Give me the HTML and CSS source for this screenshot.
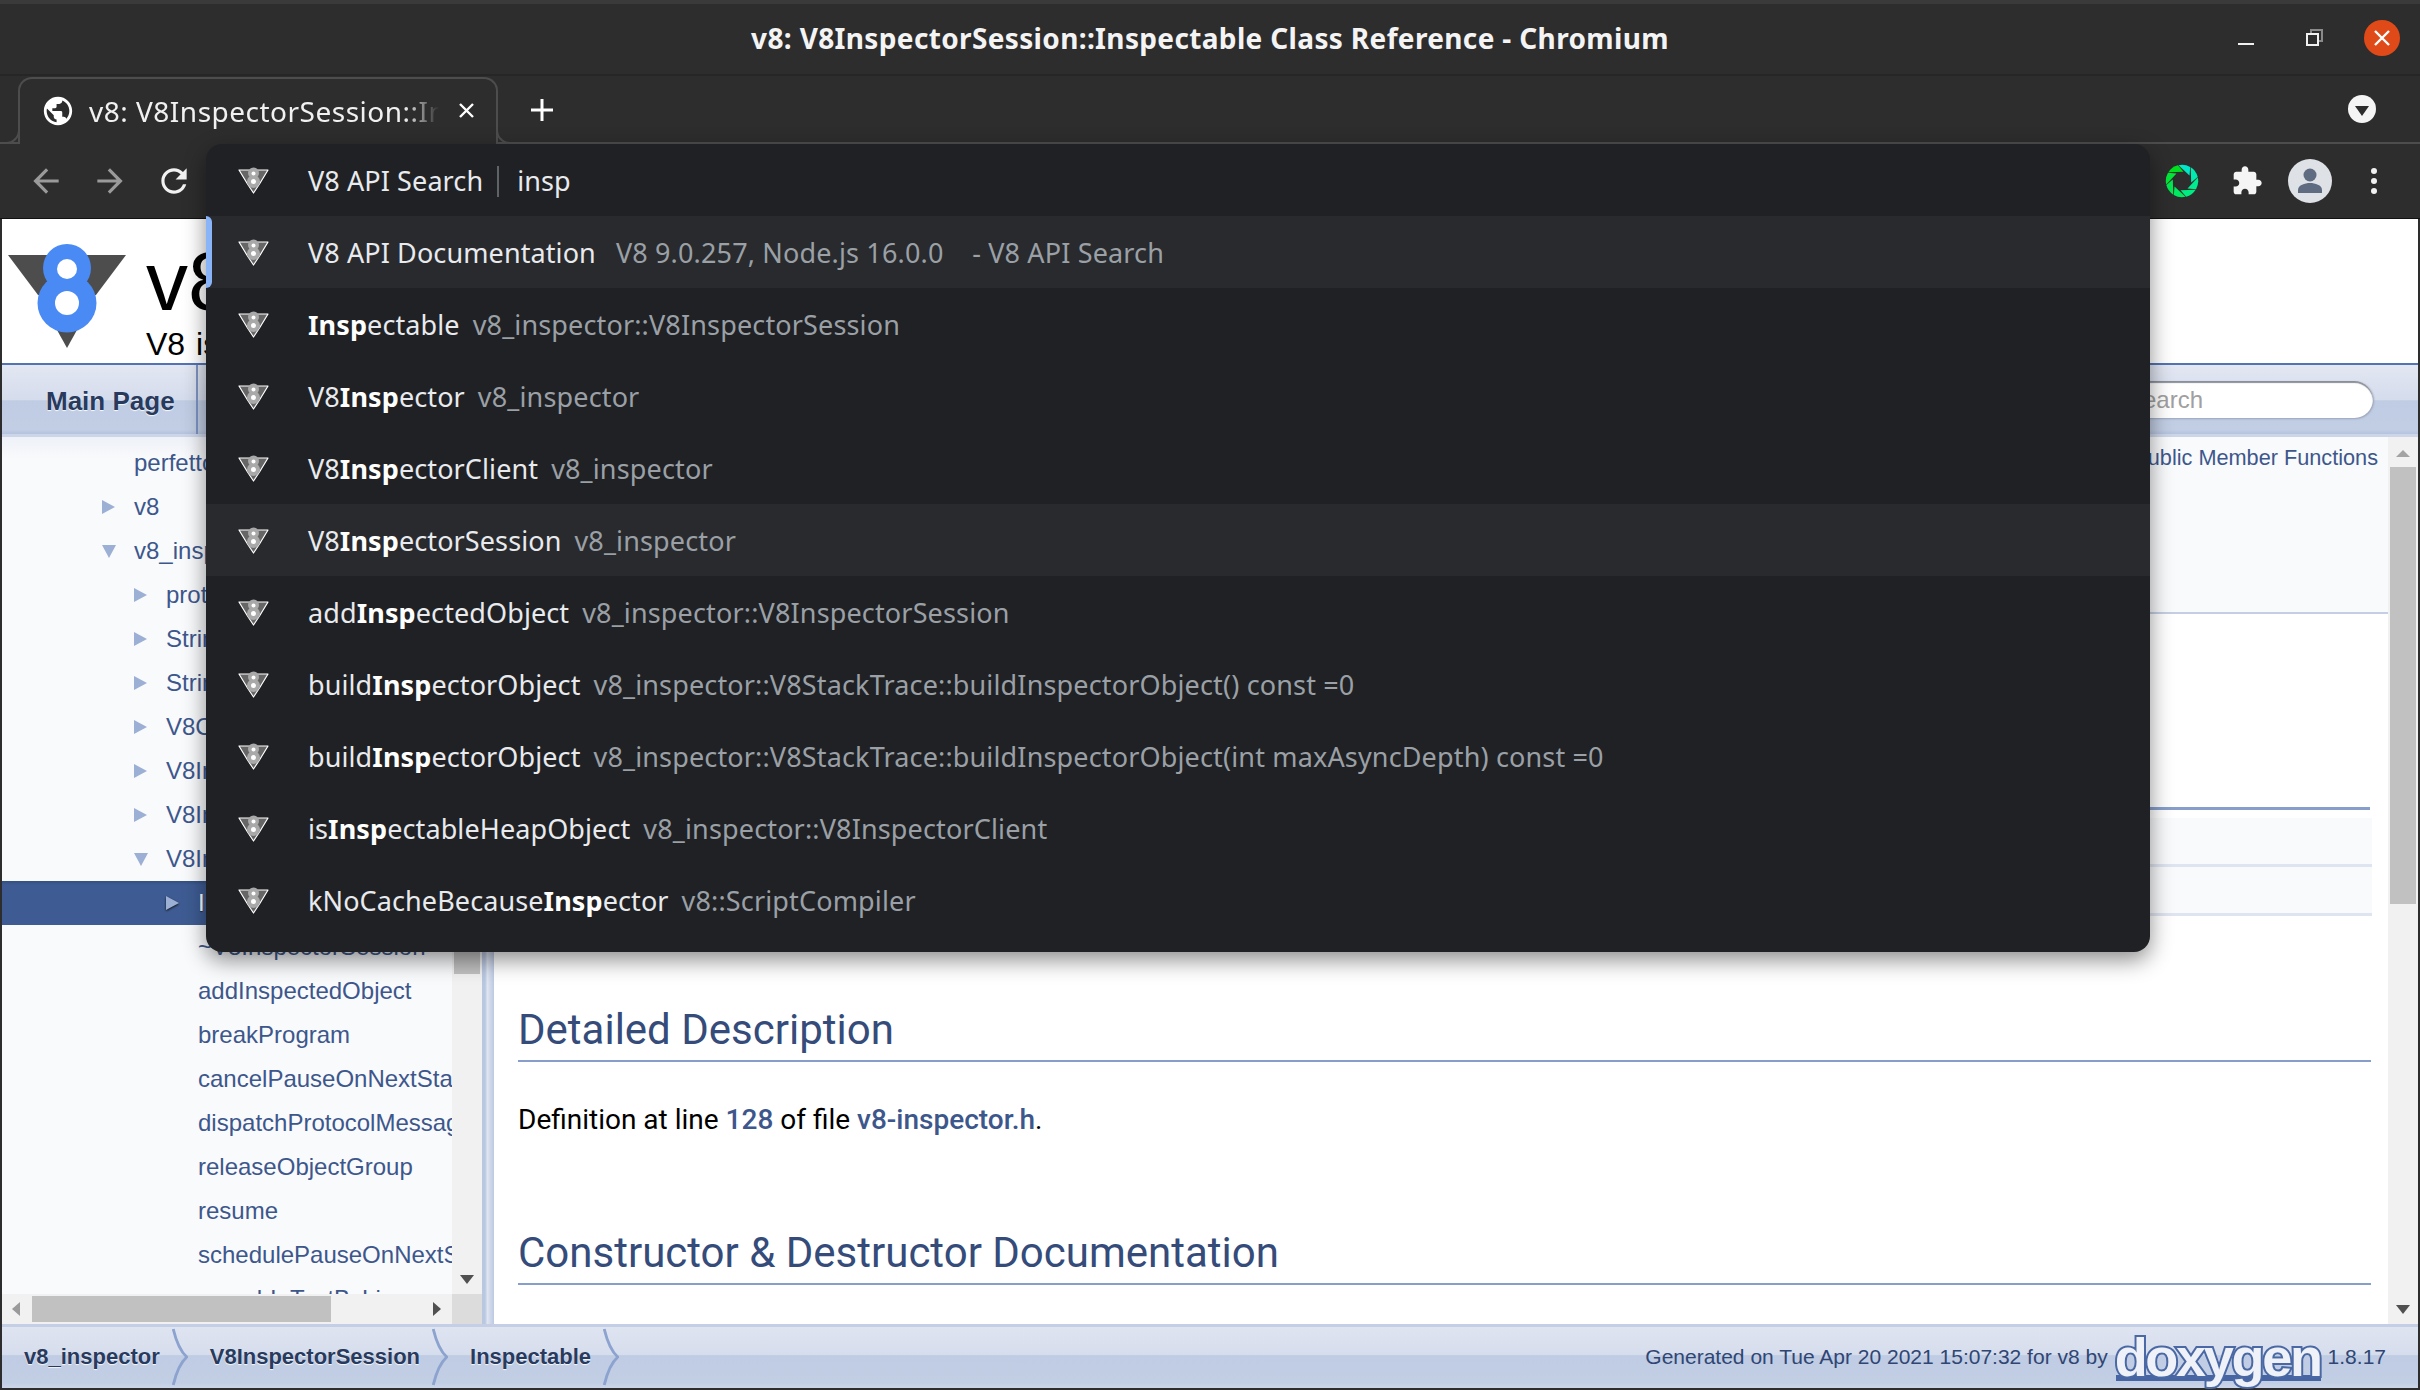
FILE: index.html
```html
<!DOCTYPE html>
<html lang="en">
<head>
  <meta charset="UTF-8" />
  <title>v8: V8InspectorSession::Inspectable Class Reference - Chromium</title>
  <link rel="stylesheet" href="styles.css">
</head>
<body>
  <svg class="defs" width="0" height="0">
    <symbol id="v8-gray" viewBox="0 0 31 27">
      <path d="M1 3 L11 3 L15.5 5 L20 3 L30 3 L21.5 17 L15.5 26 L9.5 17 Z" fill="#666" stroke="#fff" stroke-width="1.2" stroke-linejoin="round"/>
      <circle cx="15.5" cy="6" r="5.5" fill="#a9a9a9"/>
      <circle cx="15.5" cy="14.5" r="6.5" fill="#a9a9a9"/>
      <circle cx="15.5" cy="6.6" r="2" fill="#fff"/>
      <circle cx="15.5" cy="14.6" r="2.5" fill="#fff"/>
    </symbol>
    <symbol id="crumb-sep" viewBox="0 0 16 60">
      <path d="M1 1 Q6 22 15 30 Q6 38 1 59" fill="none" stroke="#8ca3cf" stroke-width="3"/>
    </symbol>
  </svg>

  <div class="titlebar">
    <div class="window-title">v8: V8InspectorSession::Inspectable Class Reference - Chromium</div>
    <div class="window-controls">
      <span class="win-min"></span>
      <span class="win-restore"></span>
      <span class="win-close">
        <svg width="20" height="20" viewBox="0 0 20 20"><path d="M3 3 L17 17 M17 3 L3 17" stroke="#fff" stroke-width="2.4"/></svg>
      </span>
    </div>
  </div>

  <div class="tabstrip">
    <div class="tab">
      <svg class="favicon" width="34" height="34" viewBox="0 0 24 24"><path fill="#fff" d="M12 2C6.48 2 2 6.48 2 12s4.48 10 10 10 10-4.48 10-10S17.52 2 12 2zm-1 17.93c-3.95-.49-7-3.85-7-7.93 0-.62.08-1.21.21-1.79L9 15v1c0 1.1.9 2 2 2v1.93zm6.9-2.54c-.26-.81-1-1.39-1.9-1.39h-1v-3c0-.55-.45-1-1-1H8v-2h2c.55 0 1-.45 1-1V7h2c1.1 0 2-.9 2-2v-.41c2.93 1.19 5 4.06 5 7.41 0 2.08-.8 3.97-2.1 5.39z"/></svg>
      <span class="tab-title">v8: V8InspectorSession::Inspectable Class Reference</span>
      <svg class="tab-close" width="17" height="17" viewBox="0 0 17 17"><path d="M2 2 L15 15 M15 2 L2 15" stroke="#fff" stroke-width="2.4"/></svg>
    </div>
    <svg class="new-tab" width="24" height="24" viewBox="0 0 24 24"><path d="M12 1 V23 M1 12 H23" stroke="#fff" stroke-width="3"/></svg>
    <span class="tab-search"><i></i></span>
  </div>

  <div class="toolbar">
    <div class="nav-buttons">
      <svg width="38" height="38" viewBox="0 0 24 24"><path fill="#9a9a9a" d="M20 11H7.83l5.59-5.59L12 4l-8 8 8 8 1.41-1.41L7.83 13H20v-2z"/></svg>
      <svg width="38" height="38" viewBox="0 0 24 24"><path fill="#9a9a9a" d="M4 11h12.17l-5.59-5.59L12 4l8 8-8 8-1.41-1.41L16.17 13H4v-2z"/></svg>
      <svg width="38" height="38" viewBox="0 0 24 24"><path fill="#f1f1f1" d="M17.65 6.35C16.2 4.9 14.21 4 12 4c-4.42 0-7.99 3.58-7.99 8s3.57 8 7.99 8c3.73 0 6.84-2.55 7.73-6h-2.08c-.82 2.33-3.04 4-5.65 4-3.31 0-6-2.69-6-6s2.69-6 6-6c1.66 0 3.14.69 4.22 1.78L13 11h7V4l-2.35 2.35z"/></svg>
    </div>
    <div class="toolbar-right">
      <svg class="aperture" width="34" height="34" viewBox="-17 -17 34 34">
        <path d="M-3.5 -15.8 A16.2 16.2 0 0 1 8.2 -14 L7.5 -5.5 Z" fill="#00e8c8"/>
        <path d="M-3.5 -15.8 A16.2 16.2 0 0 1 8.2 -14 L7.5 -5.5 Z" fill="#00ecb0" transform="rotate(45)"/>
        <path d="M-3.5 -15.8 A16.2 16.2 0 0 1 8.2 -14 L7.5 -5.5 Z" fill="#00ec90" transform="rotate(90)"/>
        <path d="M-3.5 -15.8 A16.2 16.2 0 0 1 8.2 -14 L7.5 -5.5 Z" fill="#00ec80" transform="rotate(135)"/>
        <path d="M-3.5 -15.8 A16.2 16.2 0 0 1 8.2 -14 L7.5 -5.5 Z" fill="#00ea60" transform="rotate(180)"/>
        <path d="M-3.5 -15.8 A16.2 16.2 0 0 1 8.2 -14 L7.5 -5.5 Z" fill="#00e850" transform="rotate(225)"/>
        <path d="M-3.5 -15.8 A16.2 16.2 0 0 1 8.2 -14 L7.5 -5.5 Z" fill="#00e838" transform="rotate(270)"/>
        <path d="M-3.5 -15.8 A16.2 16.2 0 0 1 8.2 -14 L7.5 -5.5 Z" fill="#00e020" transform="rotate(315)"/>
      </svg>
      <svg class="puzzle" width="32" height="32" viewBox="0 0 24 24"><path fill="#f5f5f5" d="M20.5 11H19V7c0-1.1-.9-2-2-2h-4V3.5C13 2.12 11.88 1 10.5 1S8 2.12 8 3.5V5H4c-1.1 0-1.99.9-1.99 2v3.8H3.5c1.49 0 2.7 1.21 2.7 2.7s-1.21 2.7-2.7 2.7H2V20c0 1.1.9 2 2 2h3.8v-1.5c0-1.49 1.21-2.7 2.7-2.7 1.49 0 2.7 1.21 2.7 2.7V22H17c1.1 0 2-.9 2-2v-4h1.5c1.38 0 2.5-1.12 2.5-2.5S21.88 11 20.5 11z"/></svg>
      <svg class="avatar" width="44" height="44" viewBox="0 0 44 44">
        <circle cx="22" cy="22" r="22" fill="#dee1e6"/>
        <circle cx="22" cy="16" r="6.5" fill="#5f6b80"/>
        <path d="M10 34 V31 C10 26 17 24 22 24 C27 24 34 26 34 31 V34 Z" fill="#5f6b80"/>
      </svg>
      <span class="kebab"><i></i><i></i><i></i></span>
    </div>
  </div>

  <div class="page">
    <div class="doc-header">
      <svg class="v8-logo" width="118" height="106" viewBox="0 0 118 106">
        <path d="M0 12 L45 12 L45 56 L30 52 Z M118 12 L73 12 L73 56 L88 52 Z" fill="#4d4d4d"/>
        <path d="M49 87 L59 105 L69 87 Z" fill="#4d4d4d"/>
        <circle cx="59" cy="25" r="24" fill="#4a8af4"/>
        <circle cx="59" cy="60" r="29.5" fill="#4a8af4"/>
        <circle cx="59" cy="26" r="10" fill="#fff"/>
        <circle cx="59" cy="60" r="12" fill="#fff"/>
      </svg>
      <div class="project">
        <div class="project-name">v8</div>
        <div class="project-brief">V8 is</div>
      </div>
    </div>

    <div class="doc-tabs">
      <a class="main-tab">Main Page</a>
      <div class="search-box">Search</div>
    </div>

    <div class="doc-body">
      <div class="side-nav">
        <div class="tree-area">
          <ul class="tree">
            <li class="lvl1"><a>perfetto</a></li>
            <li class="lvl1"><i class="arrow-r"></i><a>v8</a></li>
            <li class="lvl1"><i class="arrow-d"></i><a>v8_inspector</a></li>
            <li class="lvl2"><i class="arrow-r"></i><a>protocol</a></li>
            <li class="lvl2"><i class="arrow-r"></i><a>StringBuffer</a></li>
            <li class="lvl2"><i class="arrow-r"></i><a>StringView</a></li>
            <li class="lvl2"><i class="arrow-r"></i><a>V8ContextInfo</a></li>
            <li class="lvl2"><i class="arrow-r"></i><a>V8Inspector</a></li>
            <li class="lvl2"><i class="arrow-r"></i><a>V8InspectorClient</a></li>
            <li class="lvl2"><i class="arrow-d"></i><a>V8InspectorSession</a></li>
            <li class="lvl3 selected"><i class="arrow-r"></i><a>Inspectable</a></li>
            <li class="lvl4"><a>~V8InspectorSession</a></li>
            <li class="lvl4"><a>addInspectedObject</a></li>
            <li class="lvl4"><a>breakProgram</a></li>
            <li class="lvl4"><a>cancelPauseOnNextStatement</a></li>
            <li class="lvl4"><a>dispatchProtocolMessage</a></li>
            <li class="lvl4"><a>releaseObjectGroup</a></li>
            <li class="lvl4"><a>resume</a></li>
            <li class="lvl4"><a>schedulePauseOnNextStatement</a></li>
            <li class="lvl4"><a>searchInTextByLines</a></li>
          </ul>
          <div class="vscroll tree-scroll">
            <div class="vthumb"></div>
            <i class="sb-down"></i>
          </div>
        </div>
        <div class="hscroll">
          <div class="hscroll-track">
            <i class="sb-left"></i>
            <div class="hthumb"></div>
            <i class="sb-right"></i>
          </div>
          <div class="sb-corner"></div>
        </div>
      </div>
      <div class="splitter"></div>

      <div class="doc-content">
        <div class="content-inner">
          <div class="summary-bar"><a>Public Member Functions</a></div>
          <div class="member-block">
            <div class="member-head"></div>
            <div class="member-row"></div>
            <div class="member-row"></div>
          </div>
          <h2 class="first">Detailed Description</h2>
          <p class="definition">Definition at line <a>128</a> of file <a>v8-inspector.h</a>.</p>
          <h2 class="second">Constructor &amp; Destructor Documentation</h2>
        </div>
        <div class="vscroll page-scroll">
          <i class="sb-up"></i>
          <div class="vthumb"></div>
          <i class="sb-down"></i>
        </div>
      </div>
    </div>

    <div class="doc-footer">
      <ul class="crumbs">
        <li>v8_inspector<svg class="crumb-chevron"><use href="#crumb-sep"/></svg></li>
        <li>V8InspectorSession<svg class="crumb-chevron"><use href="#crumb-sep"/></svg></li>
        <li>Inspectable<svg class="crumb-chevron"><use href="#crumb-sep"/></svg></li>
      </ul>
      <div class="generated">
        Generated on Tue Apr 20 2021 15:07:32 for v8 by
        <span class="doxygen">doxygen</span>
        1.8.17
      </div>
    </div>
  </div>

  <!-- omnibox dropdown, sits on top of everything -->
  <div class="omnibox">
    <div class="omni-row input-row">
      <svg class="omni-icon"><use href="#v8-gray"/></svg>
      <span class="keyword">V8 API Search</span><span class="omni-query">insp</span>
    </div>
    <div class="omni-row active">
      <svg class="omni-icon"><use href="#v8-gray"/></svg>
      <span>V8 API Documentation</span><span class="dim wide">V8 9.0.257, Node.js 16.0.0 &nbsp;&nbsp; - V8 API Search</span>
    </div>
    <div class="omni-row">
      <svg class="omni-icon"><use href="#v8-gray"/></svg>
      <span><b>Insp</b>ectable</span><span class="dim">v8_inspector::V8InspectorSession</span>
    </div>
    <div class="omni-row">
      <svg class="omni-icon"><use href="#v8-gray"/></svg>
      <span>V8<b>Insp</b>ector</span><span class="dim">v8_inspector</span>
    </div>
    <div class="omni-row">
      <svg class="omni-icon"><use href="#v8-gray"/></svg>
      <span>V8<b>Insp</b>ectorClient</span><span class="dim">v8_inspector</span>
    </div>
    <div class="omni-row hover">
      <svg class="omni-icon"><use href="#v8-gray"/></svg>
      <span>V8<b>Insp</b>ectorSession</span><span class="dim">v8_inspector</span>
    </div>
    <div class="omni-row">
      <svg class="omni-icon"><use href="#v8-gray"/></svg>
      <span>add<b>Insp</b>ectedObject</span><span class="dim">v8_inspector::V8InspectorSession</span>
    </div>
    <div class="omni-row">
      <svg class="omni-icon"><use href="#v8-gray"/></svg>
      <span>build<b>Insp</b>ectorObject</span><span class="dim">v8_inspector::V8StackTrace::buildInspectorObject() const =0</span>
    </div>
    <div class="omni-row">
      <svg class="omni-icon"><use href="#v8-gray"/></svg>
      <span>build<b>Insp</b>ectorObject</span><span class="dim">v8_inspector::V8StackTrace::buildInspectorObject(int maxAsyncDepth) const =0</span>
    </div>
    <div class="omni-row">
      <svg class="omni-icon"><use href="#v8-gray"/></svg>
      <span>is<b>Insp</b>ectableHeapObject</span><span class="dim">v8_inspector::V8InspectorClient</span>
    </div>
    <div class="omni-row">
      <svg class="omni-icon"><use href="#v8-gray"/></svg>
      <span>kNoCacheBecause<b>Insp</b>ector</span><span class="dim">v8::ScriptCompiler</span>
    </div>
  </div>
</body>
</html>
```

FILE: styles.css
```css
* {
  box-sizing: border-box;
}

html, body {
  margin: 0;
  padding: 0;
}

body {
  width: 2420px;
  height: 1390px;
  overflow: hidden;
  position: relative;
  display: flex;
  flex-direction: column;
  background: #2d2d2d;
  font-family: "Noto Sans", sans-serif;
  color: #fff;
}

.defs {
  position: absolute;
}

/* window chrome */

.titlebar {
  height: 76px;
  flex: none;
  display: flex;
  align-items: center;
  justify-content: center;
  position: relative;
  padding-bottom: 2px;
  background: #2d2d2d;
  border-top: 4px solid #3a3a3a;
  border-bottom: 2px solid #262626;
}

.window-title {
  font-size: 28px;
  font-weight: 700;
  letter-spacing: 0.35px;
  color: #f4f4f4;
}

.window-controls {
  position: absolute;
  right: 20px;
  top: 16px;
  display: flex;
  align-items: center;
}

.win-min {
  width: 16px;
  height: 2px;
  margin-top: 12px;
  margin-right: 52px;
  background: #f0f0f0;
}

.win-restore {
  width: 13px;
  height: 13px;
  margin-top: 3px;
  margin-right: 45px;
  border: 2px solid #f0f0f0;
  box-shadow: 4px -4px 0 -2px #2d2d2d, 4px -4px 0 0 #8a8a8a;
}

.win-close {
  width: 36px;
  height: 36px;
  border-radius: 50%;
  background: #e04a18;
  display: flex;
  align-items: center;
  justify-content: center;
}

.tabstrip {
  height: 68px;
  flex: none;
  display: flex;
  align-items: flex-end;
  position: relative;
  border-bottom: 2px solid #4d4d4d;
}

.tab {
  width: 480px;
  height: 67px;
  margin-left: 18px;
  margin-bottom: -2px;
  padding: 0 0 2px 22px;
  display: flex;
  align-items: center;
  position: relative;
  background: #2d2d2d;
  border: 2px solid #4d4d4d;
  border-bottom: none;
  border-radius: 14px 14px 0 0;
}

.tab::before,
.tab::after {
  content: "";
  position: absolute;
  bottom: 0;
  width: 18px;
  height: 16px;
  border-bottom: 2px solid #4d4d4d;
}

.tab::before {
  left: -20px;
  border-right: 2px solid #4d4d4d;
  border-bottom-right-radius: 14px;
}

.tab::after {
  right: -20px;
  border-left: 2px solid #4d4d4d;
  border-bottom-left-radius: 14px;
}

.favicon {
  flex: none;
  margin-left: -1px;
}

.tab-title {
  width: 350px;
  margin-left: 14px;
  white-space: nowrap;
  overflow: hidden;
  font-size: 28px;
  letter-spacing: 0.5px;
  color: #f1f1f1;
  -webkit-mask-image: linear-gradient(90deg, #000 90%, transparent 100%);
  mask-image: linear-gradient(90deg, #000 90%, transparent 100%);
}

.tab-close {
  flex: none;
  margin-left: 19px;
}

.new-tab {
  margin: 0 0 20px 32px;
}

.tab-search {
  position: absolute;
  right: 44px;
  top: 19px;
  width: 28px;
  height: 28px;
  border-radius: 50%;
  background: #f5f5f5;
  display: flex;
  align-items: center;
  justify-content: center;
}

.tab-search i {
  width: 0;
  height: 0;
  margin-top: 3px;
  border-left: 7px solid transparent;
  border-right: 7px solid transparent;
  border-top: 10px solid #2d2d2d;
}

.toolbar {
  height: 75px;
  flex: none;
  display: flex;
  align-items: center;
  justify-content: space-between;
  padding: 0 43px 0 27px;
  border-bottom: 1px solid #111;
}

.nav-buttons {
  display: flex;
  gap: 26px;
}

.toolbar-right {
  display: flex;
  align-items: center;
}

.puzzle {
  margin-left: 32px;
}

.avatar {
  margin-left: 25px;
}

.kebab {
  margin-left: 39px;
  display: flex;
  flex-direction: column;
  gap: 4px;
}

.kebab i {
  width: 6px;
  height: 6px;
  border-radius: 50%;
  background: #f1f1f1;
}

/* doxygen page */

.page {
  flex: 1;
  min-height: 0;
  margin: 0 2px 2px;
  display: flex;
  flex-direction: column;
  background: #fff;
  color: #000;
  font-family: "Liberation Sans", Arial, sans-serif;
}

.doc-header {
  height: 146px;
  flex: none;
  display: flex;
  padding: 24px 0 0 6px;
  border-bottom: 2px solid #5373b4;
}

.project {
  margin-left: 20px;
}

.project-name {
  font-size: 84px;
  line-height: 76px;
  margin-top: 0;
}

.project-brief {
  font-size: 32px;
  line-height: 38px;
  margin-top: 6px;
  word-spacing: 2px;
}

.doc-tabs {
  height: 72px;
  flex: none;
  display: flex;
  align-items: center;
  justify-content: space-between;
  background: linear-gradient(#e2e7f2 0, #d5dcec 50%, #bfcce3 52%, #c2cee4 94%, #b4c2de 100%);
  border-bottom: 3px solid #cdd6e9;
}

.main-tab {
  height: 69px;
  width: 196px;
  padding: 3px 0 0 44px;
  display: flex;
  align-items: center;
  font-size: 26px;
  font-weight: 700;
  color: #283a5d;
  text-shadow: 0 1px 1px rgba(255, 255, 255, 0.9);
  border-right: 2px solid #7d95c4;
}

.search-box {
  width: 360px;
  height: 37px;
  margin-right: 45px;
  padding-left: 114px;
  display: flex;
  align-items: center;
  font-size: 24px;
  color: #a0a0a0;
  background: #fff;
  border-radius: 19px;
  box-shadow: inset 0 2px 1px #8a8f99, 1px 1px 2px #9aa4ba;
}

.doc-body {
  flex: 1;
  min-height: 0;
  display: flex;
}

.side-nav {
  width: 480px;
  flex: none;
  display: flex;
  flex-direction: column;
}

.tree-area {
  flex: 1;
  min-height: 0;
  display: flex;
}

.tree {
  flex: 1;
  min-width: 0;
  margin: 0;
  padding: 4px 0 0;
  list-style: none;
  overflow: hidden;
  background: linear-gradient(#eef1f7 0, #f9fafc 22px);
}

.tree li {
  height: 44px;
  display: flex;
  align-items: center;
  white-space: nowrap;
  font-size: 24px;
  color: #3d578c;
  position: relative;
}

.tree .lvl1 { padding-left: 132px; }
.tree .lvl2 { padding-left: 164px; }
.tree .lvl3 { padding-left: 196px; }
.tree .lvl4 { padding-left: 196px; }

.tree .selected {
  background: linear-gradient(#33507f 0, #3e5c93 4px, #3e5c93 100%);
  color: #fff;
  text-shadow: 0 1px 1px rgba(0, 0, 0, 0.5);
}

.arrow-r,
.arrow-d {
  position: absolute;
  width: 0;
  height: 0;
  margin-left: -32px;
}

.arrow-r {
  border-top: 7px solid transparent;
  border-bottom: 7px solid transparent;
  border-left: 13px solid #9cafd4;
}

.arrow-d {
  margin-left: -32px;
  border-left: 7px solid transparent;
  border-right: 7px solid transparent;
  border-top: 13px solid #9cafd4;
}

.selected .arrow-r {
  filter: drop-shadow(0 1px 1px #111);
}

.vscroll {
  width: 30px;
  flex: none;
  display: flex;
  flex-direction: column;
  align-items: center;
  background: #f1f1f1;
}

.tree-scroll {
  width: 30px;
}

.vthumb {
  width: 26px;
  background: #c1c1c1;
}

.tree-scroll .vthumb {
  height: 500px;
  margin-top: 37px;
}

.sb-down {
  width: 0;
  height: 0;
  border-left: 7px solid transparent;
  border-right: 7px solid transparent;
  border-top: 9px solid #505050;
  margin-top: auto;
  margin-bottom: 10px;
}

.sb-up {
  width: 0;
  height: 0;
  margin-top: 13px;
  border-left: 7px solid transparent;
  border-right: 7px solid transparent;
  border-bottom: 7px solid #a3a3a3;
}

.hscroll {
  height: 30px;
  flex: none;
  display: flex;
}

.hscroll-track {
  flex: 1;
  display: flex;
  align-items: center;
  background: #f1f1f1;
}

.sb-left {
  width: 0;
  height: 0;
  margin-left: 10px;
  border-top: 7px solid transparent;
  border-bottom: 7px solid transparent;
  border-right: 8px solid #9a9a9a;
}

.hthumb {
  width: 299px;
  height: 26px;
  margin-left: 12px;
  background: #c1c1c1;
}

.sb-right {
  width: 0;
  height: 0;
  margin-left: auto;
  margin-right: 11px;
  border-top: 7px solid transparent;
  border-bottom: 7px solid transparent;
  border-left: 8px solid #505050;
}

.sb-corner {
  width: 30px;
  background: #dcdcdc;
}

.splitter {
  width: 12px;
  flex: none;
  background: linear-gradient(90deg, #b9c7e1 0, #b9c7e1 25%, #dfe5f1 45%, #bcc9e2 100%);
}

.doc-content {
  flex: 1;
  min-width: 0;
  display: flex;
  font-family: Roboto, sans-serif;
}

.content-inner {
  flex: 1;
  min-width: 0;
  overflow: hidden;
}

.summary-bar {
  height: 177px;
  padding: 7px 10px 0 0;
  text-align: right;
  font-family: "Liberation Sans", Arial, sans-serif;
  font-size: 21.7px;
  line-height: 28px;
  color: #3d578c;
  background: #f9fafc;
  border-bottom: 2px solid #c4cfe5;
}

.member-block {
  margin: 193px 16px 0 24px;
}

.member-head {
  height: 3px;
  margin-right: 2px;
  background: #879ecb;
}

.member-row {
  height: 49px;
  background: #f9fafc;
  border-bottom: 3px solid #dee4f0;
}

.member-head + .member-row {
  margin-top: 8px;
}

.doc-content h2 {
  margin: 0 17px 0 24px;
  height: 55px;
  font-size: 42px;
  font-weight: 400;
  line-height: 46px;
  color: #354c7b;
  border-bottom: 2px solid #879ecb;
}

.doc-content h2.first {
  margin-top: 91px;
}

.doc-content h2.second {
  margin-top: 92px;
}

.definition {
  margin: 40px 0 0 24px;
  font-size: 28px;
  line-height: 36px;
}

.definition a {
  color: #3d578c;
  font-weight: 500;
}

.page-scroll {
  position: relative;
}

.page-scroll .vthumb {
  height: 437px;
  margin-top: 10px;
}

/* breadcrumb footer */

.doc-footer {
  height: 64px;
  flex: none;
  display: flex;
  align-items: center;
  justify-content: space-between;
  padding: 0 32px 2px 0;
  background: linear-gradient(#dfe4f1 0, #d6ddec 45%, #bfcce3 47%, #c2cee4 92%, #cdd6e9 100%);
  border-top: 3px solid #c4cfe5;
}

.crumbs {
  display: flex;
  margin: 0;
  padding: 0;
  list-style: none;
  font-family: "Liberation Sans", Arial, sans-serif;
  font-size: 22px;
  font-weight: 700;
  color: #283a5d;
  text-shadow: 0 1px 1px rgba(255, 255, 255, 0.9);
}

.crumbs li {
  position: relative;
  padding: 0 26px 0 22px;
  margin-right: 2px;
}

.crumb-chevron {
  position: absolute;
  right: -2px;
  top: 50%;
  width: 16px;
  height: 58px;
  margin-top: -29px;
}

.generated {
  display: flex;
  align-items: center;
  gap: 7px;
  font-size: 21px;
  color: #2f4674;
}

.doxygen {
  position: relative;
  isolation: isolate;
  font-family: "Liberation Sans", Arial, sans-serif;
  font-size: 54px;
  font-weight: 700;
  line-height: 50px;
  letter-spacing: -2.3px;
  color: #eef1f8;
  -webkit-text-stroke: 4px #4a68a4;
  paint-order: stroke fill;
}

.doxygen::after {
  content: "";
  position: absolute;
  left: 1px;
  right: 0;
  bottom: 1px;
  height: 6px;
  z-index: -1;
  background: #4665a2;
}

/* omnibox dropdown */

.omnibox {
  position: absolute;
  left: 206px;
  top: 144px;
  width: 1944px;
  height: 808px;
  padding-bottom: 16px;
  background: #202124;
  border-radius: 16px;
  box-shadow: 0 8px 22px rgba(0, 0, 0, 0.45);
  font-family: "Noto Sans", sans-serif;
  overflow: hidden;
}

.omni-row {
  height: 72px;
  display: flex;
  align-items: center;
  padding-left: 32px;
  position: relative;
  white-space: nowrap;
  font-size: 27px;
  letter-spacing: 0.1px;
  color: #e8eaed;
}

.omni-row b {
  font-weight: 700;
  color: #fff;
}

.omni-row.active,
.omni-row.hover {
  background: #292a2d;
}

.omni-row.active::before {
  content: "";
  position: absolute;
  left: 0;
  top: 0;
  bottom: 0;
  width: 6px;
  background: #8ab4f8;
  border-radius: 0 6px 6px 0;
}

.omni-icon {
  width: 31px;
  height: 27px;
  flex: none;
  margin-right: 39px;
}

.dim {
  margin-left: 13px;
  letter-spacing: 0.15px;
  color: #9aa0a6;
}

.dim.wide {
  margin-left: 20px;
}

.keyword {
  padding-right: 16px;
  position: relative;
}

.keyword::after {
  content: "";
  position: absolute;
  right: 0;
  top: 4px;
  bottom: 2px;
  width: 2px;
  background: #5f6368;
}

.omni-query {
  margin-left: 18px;
}
```
